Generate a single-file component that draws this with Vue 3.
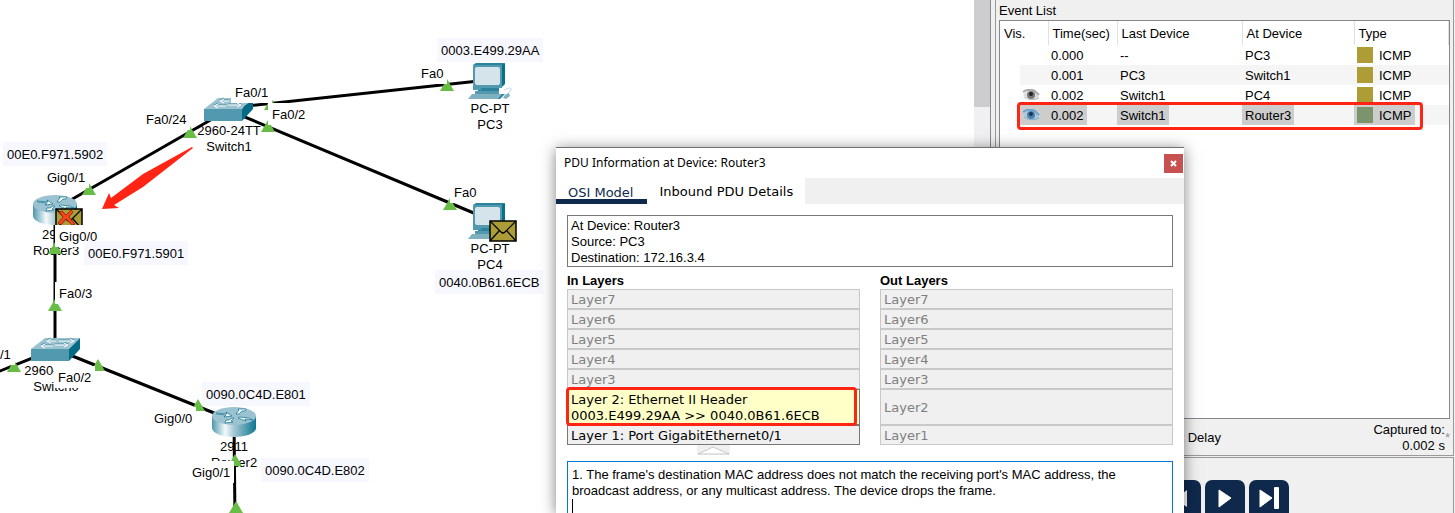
<script setup>
const links = [
  [228, 108, 488, 80],
  [228, 110, 488, 219],
  [228, 110, 55, 209],
  [55, 209, 55, 350],
  [55, 349, 234, 421],
  [55, 349, -5, 373],
  [234, 421, 235, 520],
]

const names = [
  { x: 229, y: 139, lines: ['2960-24TT', 'Switch1'] },
  { x: 490, y: 117, lines: ['PC-PT', 'PC3'] },
  { x: 490, y: 257, lines: ['PC-PT', 'PC4'] },
  { x: 56, y: 243, lines: ['2911', 'Router3'] },
  { x: 56, y: 379, lines: ['2960-24TT', 'Switch0'] },
  { x: 234, y: 455, lines: ['2911', 'Router2'] },
]

const marks = [
  [190, 126], [89, 183], [55, 242], [55, 299], [14, 360], [98, 359], [198, 399],
  [235, 454], [236, 501], [447, 79], [268, 120], [450, 198], [271, 98],
]

const ports = [
  { t: 'Fa0/24', x: 142, y: 119 },
  { t: 'Gig0/1', x: 43, y: 177 },
  { t: 'Gig0/0', x: 55, y: 236 },
  { t: 'Fa0/1', x: 231, y: 92 },
  { t: 'Fa0/2', x: 268, y: 114 },
  { t: 'Fa0/3', x: 55, y: 293 },
  { t: '/1', x: -4, y: 354 },
  { t: 'Fa0/2', x: 54, y: 377 },
  { t: 'Gig0/0', x: 150, y: 418 },
  { t: 'Gig0/1', x: 188, y: 472 },
  { t: 'Fa0', x: 417, y: 73 },
  { t: 'Fa0', x: 450, y: 192 },
]

const notes = [
  { t: '00E0.F971.5902', x: 3, y: 154 },
  { t: '00E0.F971.5901', x: 84, y: 253 },
  { t: '0003.E499.29AA', x: 437, y: 50 },
  { t: '0040.0B61.6ECB', x: 435, y: 282 },
  { t: '0090.0C4D.E801', x: 202, y: 394 },
  { t: '0090.0C4D.E802', x: 261, y: 470 },
]

const events = [
  { eye: false, time: '0.000', last: '--', at: 'PC3' },
  { eye: false, time: '0.001', last: 'PC3', at: 'Switch1' },
  { eye: true, time: '0.002', last: 'Switch1', at: 'PC4' },
  { eye: true, time: '0.002', last: 'Switch1', at: 'Router3', selected: true },
]

const upper = ['Layer7', 'Layer6', 'Layer5', 'Layer4', 'Layer3']
const place = (p) => ({ left: p.x + 'px', top: p.y + 'px' })
</script>

<template>
  <div class="app">
    <main class="canvas">
      <span v-for="(n, i) in names" :key="'n' + i" class="name" :style="place(n)">
        <span v-for="l in n.lines" :key="l">{{ l }}</span>
      </span>
      <svg class="drawing" width="974" height="513" aria-hidden="true">
        <defs>
          <linearGradient id="metal">
            <stop offset="0" stop-color="#4f98ae" />
            <stop offset="0.3" stop-color="#f4f9fb" />
            <stop offset="0.5" stop-color="#a5c8d3" />
            <stop offset="1" stop-color="#0e7791" />
          </linearGradient>
          <g id="switch">
            <path d="M14 0H49L38 11H0Z" fill="#9bc2d0" />
            <path d="M0 11H38V23H0Z" fill="#5299b0" />
            <path d="M38 11L49 0V11L38 23Z" fill="#056a86" />
            <path d="M25 3H17M20 1L16 3L20 5M28 3H43M39 1L43 3L39 5M22 8H11M14 6L10 8L14 10M24 7H36M33 5L37 7L33 9" fill="none" stroke="#4b8fa5" stroke-width="1" transform="translate(0 -1)" />
            <path d="M25 3H17M20 1L16 3L20 5M28 3H43M39 1L43 3L39 5M22 8H11M14 6L10 8L14 10M24 7H36M33 5L37 7L33 9" fill="none" stroke="#fff" stroke-width="1" />
          </g>
          <g id="router">
            <path d="M0 9V21C0 26 10 30 22 30S44 26 44 21V9Z" fill="url(#metal)" />
            <ellipse cx="22" cy="9" rx="22" ry="9" fill="#9bc2d0" />
            <path d="M4 6L15 7L14 5L20 9L12 10L14 8L5 7ZM24 7L27 3L26 2H34L33 4L30 4L27 7ZM27 10L37 11L41 13L33 12L34 14L26 11ZM20 11L17 13H14L13 16L21 15L19 14L22 11Z" fill="#fff" stroke="#08708b" stroke-width="0.7" />
          </g>
          <g id="pc">
            <path d="M5 2L8 0H37L34 3Z" fill="#2c839c" />
            <path d="M34 2L37 0V21L33 25Z" fill="#07718c" />
            <path d="M5 2H34V25H5Z" fill="#5299b0" />
            <rect x="7" y="4" width="25" height="18" rx="2" fill="#d5e4ea" />
            <path d="M10 25H31V28H10Z" fill="#2c839c" />
            <path d="M5 25H13V27H5ZM7 28H31V31H7Z" fill="#5299b0" />
            <path d="M4 31H36L32 36H0Z" fill="#7eb0c0" />
            <path d="M34 31L37 31L32 36L30 36Z" fill="#2c839c" />
            <path d="M36 27Q44 23 43 27L39 31" fill="none" stroke="#c5d8df" />
            <path d="M37 32L41 30L42 33L38 36L35 35Z" fill="#7eb0c0" />
          </g>
          <g id="mail">
            <rect x="1" y="1" width="26" height="20" fill="#ab9c37" stroke="#000" stroke-width="1.5" />
            <path d="M1 1L12 12Q14 14 16 12L27 1M1 21L10 11M27 21L18 11" fill="none" stroke="#000" stroke-width="1.2" />
          </g>
        </defs>
        <line v-for="(l, i) in links" :key="'l' + i" :x1="l[0]" :y1="l[1]" :x2="l[2]" :y2="l[3]" stroke="#000" stroke-width="3" />
        <use href="#switch" x="204" y="98" />
        <use href="#switch" x="31" y="338" />
        <use href="#router" x="33" y="195" />
        <use href="#router" x="212" y="407" />
        <use href="#pc" x="468" y="63" />
        <use href="#pc" x="468" y="203" />
        <use href="#mail" x="489" y="220" />
        <use href="#mail" x="55" y="208" />
        <path d="M59 212L62 211L66 215L71 210L73 212L69 217L75 224L72 225L66 219L61 225L58 223L63 217Z" fill="#f5431d" stroke="#7b1c08" stroke-width="0.7" />
        <path v-for="(m, i) in marks" :key="'m' + i" :d="`M${m[0]} ${m[1]}L${m[0] + 7} ${m[1] + 12}H${m[0] - 7}Z`" fill="#67bd45" />
      </svg>
      <span v-for="(p, i) in ports" :key="'p' + i" class="port" :style="place(p)">{{ p.t }}</span>
      <span v-for="n in notes" :key="n.t" class="note" :style="place(n)">{{ n.t }}</span>
      <svg class="drawing" width="974" height="513" aria-hidden="true">
        <path d="M192 147L143 174L111 198L109 193L102 209L119 208L114 205L143 187L193 148Z" fill="#ff2413" />
      </svg>
    </main>

    <div class="scroll"><div class="thumb"></div></div>

    <aside class="side">
      <section class="events">
        <h2>Event List</h2>
        <div class="list">
          <table>
            <thead>
              <tr><th class="c1">Vis.</th><th class="c2">Time(sec)</th><th class="c3">Last Device</th><th class="c4">At Device</th><th>Type</th></tr>
            </thead>
            <tbody>
              <tr v-for="(e, i) in events" :key="i" :class="{ picked: e.selected }">
                <td class="vis">
                  <span class="cell">
                    <svg v-if="e.eye" width="18" height="12" viewBox="0 0 18 12" aria-label="Visible">
                      <path d="M1 6Q5 1 11 2Q16 4 17 9Q9 13 1 6Z" :fill="e.selected ? '#a9c9e2' : '#dedede'" />
                      <path d="M1 3Q7 -1 13 2L17 6" fill="none" :stroke="e.selected ? '#6ea3cb' : '#aaa'" stroke-width="2" />
                      <circle cx="9" cy="6" r="4" :fill="e.selected ? '#4c7fa9' : '#777'" />
                      <circle cx="9" cy="5" r="2" :fill="e.selected ? '#173450' : '#222'" />
                      <path d="M2 8Q9 13 17 9" fill="none" :stroke="e.selected ? '#7ba9cc' : '#bbb'" />
                    </svg>
                  </span>
                </td>
                <td><span class="cell">{{ e.time }}</span></td>
                <td><span class="cell">{{ e.last }}</span></td>
                <td><span class="cell">{{ e.at }}</span></td>
                <td><span class="cell"><i class="swatch"></i>ICMP</span></td>
              </tr>
            </tbody>
          </table>
          <div class="outline"></div>
        </div>
        <div class="status">
          <span class="delay">Constant Delay</span>
          <span class="captured">Captured to:<br>0.002 s</span>
          <span class="star">*</span>
        </div>
      </section>
      <section class="player">
        <button type="button" aria-label="Back"><svg width="40" height="40"><path d="M26 10V27L14 19Z" fill="#fff" /><path d="M11 7V29" stroke="#fff" stroke-width="4" /></svg></button>
        <button type="button" aria-label="Play"><svg width="40" height="40"><path d="M14 10L26 18L14 27Z" fill="#fff" stroke="#fff" stroke-linejoin="round" /></svg></button>
        <button type="button" aria-label="Forward"><svg width="40" height="40"><path d="M11 10L23 18L11 27Z" fill="#fff" stroke="#fff" stroke-linejoin="round" /><rect x="25" y="7" width="5" height="22" rx="1" fill="#fff" /></svg></button>
      </section>
    </aside>

    <div class="dialog" role="dialog" aria-labelledby="title">
      <header>
        <span id="title">PDU Information at Device: Router3</span>
        <button type="button" class="close" aria-label="Close"><svg width="19" height="19"><path d="M7 7L12 12M12 7L7 12" stroke="#fff" stroke-width="2" /></svg></button>
      </header>
      <nav>
        <button type="button" class="tab active">OSI Model</button>
        <button type="button" class="tab">Inbound PDU Details</button>
      </nav>
      <div class="body">
        <div class="info">At Device: Router3<br>Source: PC3<br>Destination: 172.16.3.4</div>
        <div class="stacks">
          <section>
            <h3>In Layers</h3>
            <button v-for="l in upper" :key="l" type="button" class="layer" disabled>{{ l }}</button>
            <div class="current">
              <button type="button" class="layer tall lit">Layer 2: Ethernet II Header<br>0003.E499.29AA &gt;&gt; 0040.0B61.6ECB</button>
            </div>
            <button type="button" class="layer on">Layer 1: Port GigabitEthernet0/1</button>
            <button type="button" class="fold" aria-label="Collapse"><svg width="33" height="10"><path d="M1 9L16 2L32 9Z" fill="#fff" stroke="#c8c8c8" /></svg></button>
          </section>
          <section>
            <h3>Out Layers</h3>
            <button v-for="l in upper" :key="l" type="button" class="layer" disabled>{{ l }}</button>
            <button type="button" class="layer tall" disabled>Layer2</button>
            <button type="button" class="layer" disabled>Layer1</button>
          </section>
        </div>
        <div class="detail">
          <p>1. The frame's destination MAC address does not match the receiving port's MAC address, the broadcast address, or any multicast address. The device drops the frame.</p>
          <span class="caret"></span>
        </div>
      </div>
    </div>
  </div>
</template>

<style>
body { overflow: hidden; }
</style>

<style scoped>
* { box-sizing: border-box; }
.app {
  position: relative;
  display: flex;
  height: 100vh;
  overflow: hidden;
  background: #fff;
  color: #000;
  font: 13px/16px "Liberation Sans", Arial, sans-serif;
}
button { margin: 0; padding: 0; border: 0; font: inherit; color: inherit; }
svg { display: block; }

.canvas { position: relative; flex: 1; min-width: 0; overflow: hidden; }
.drawing { position: absolute; left: 0; top: 0; }
.name, .port, .note { position: absolute; white-space: nowrap; }
.name { display: flex; flex-direction: column; align-items: center; transform: translate(-50%, -50%); }
.port { padding: 2px 4px 0; line-height: 20px; background: #fff; transform: translateY(-50%); }
.note { padding: 2px 4px 0; line-height: 22px; background: #f7f8ff; transform: translateY(-50%); }

.scroll { width: 16px; background: #f0f0f0; }
.thumb { height: 107px; background: #cdcdcd; }

.side {
  display: flex;
  flex-direction: column;
  gap: 1px;
  width: 465px;
  padding: 0 1px 0 4px;
  border-left: 1px solid #888a90;
  background: #f0f0f0;
}
.events { display: flex; flex: none; flex-direction: column; height: 456px; padding: 0 3px; border: 1px solid #999; border-top: 0; }
h2 { margin: 0; padding: 3px 0 1px; font-size: 13px; line-height: 16px; font-weight: 400; }
.list { position: relative; flex: 1; border: 1px solid #828790; background: #fff; }
table { width: 100%; border-collapse: collapse; table-layout: fixed; }
th { height: 24px; padding: 2px 4px 0; border-right: 1px solid #e0e0e0; font-weight: 400; text-align: left; }
.c1 { width: 48px; }
.c2 { width: 69px; }
.c3 { width: 125px; }
.c4 { width: 112px; }
td { height: 20px; padding: 0; }
tbody tr:nth-child(even) td:not(.vis) { background: #f5f5f5; }
tbody tr:nth-child(even) .vis { background: linear-gradient(90deg, #fff 20px, #f5f5f5 20px); }
.cell { display: inline-flex; align-items: center; height: 20px; padding: 2px 3px 0; vertical-align: top; }
.vis .cell { display: flex; margin-left: 20px; padding: 0 2px; }
.picked .cell { background: #cdcdcd; }
.swatch { width: 16px; height: 16px; margin: -2px 6px 0 0; background: #ae9c36; }
.picked .swatch { background: #7b946b; }
.outline { position: absolute; left: 17px; top: 81px; right: 26px; height: 28px; border: 3px solid #ff2413; border-radius: 4px; }

.status { display: flex; justify-content: flex-end; align-items: center; height: 36px; padding-top: 2px; }
.delay { margin-right: auto; padding-left: 133px; }
.captured { text-align: right; }
.star { color: #999; }
.player { display: flex; flex: none; gap: 4px; height: 80px; padding: 22px 0 0 165px; border: 1px solid #999; border-bottom: 0; }
.player button { width: 40px; height: 40px; border-radius: 7px; background: #0f294d; }

.dialog {
  position: absolute;
  left: 556px;
  top: 147px;
  bottom: 0;
  width: 628px;
  border-top: 1px solid #707070;
  background: #fff;
  box-shadow: 0 2px 14px rgba(0, 0, 0, 0.5);
}
header { display: flex; justify-content: space-between; align-items: center; height: 30px; padding: 0 1px 0 8px; font: 12px/16px "Noto Sans", sans-serif; }
.close { width: 19px; height: 19px; background: #c75050; }
nav { display: flex; height: 26px; background: #f0f0f0; font: 13px/16px "DejaVu Sans", Verdana, sans-serif; }
.tab { padding: 2px 12px 0; background: #fff; }
.active { padding-right: 14px; border-bottom: 5px solid #0f294d; border-top: 5px solid #fff; color: #0f294d; }
.body { padding: 11px 11px 0; }
.info { height: 52px; padding: 2px 3px; border: 1px solid #777; }
.stacks { display: grid; grid-template-columns: 1fr 1fr; gap: 20px; padding-top: 6px; }
h3 { margin: 0; font-size: 13px; line-height: 16px; font-weight: 700; }
.layer {
  display: block;
  width: 100%;
  height: 20px;
  padding: 2px 3px 0;
  border: 1px solid #c8c8c8;
  background: #f0f0f0;
  color: #808080;
  font: 13px/16px "DejaVu Sans", Verdana, sans-serif;
  text-align: left;
}
.tall { height: 36px; }
.lit { border-color: #777; background: #ffffc8; color: #000; }
.on { border-color: #777; color: #000; }
.current { position: relative; }
.current::after { content: ""; position: absolute; inset: -2px 3px -1px -1px; border: 3px solid #ff2413; border-radius: 4px; pointer-events: none; }
.fold { display: block; width: 33px; height: 10px; margin: 0 auto; background: #f0f0f0; }
.detail { height: 120px; margin-top: 6px; padding: 5px 4px; border: 1px solid #0078d7; }
p { margin: 0; max-width: 560px; }
.caret { display: block; width: 1px; height: 16px; background: #000; }
</style>
